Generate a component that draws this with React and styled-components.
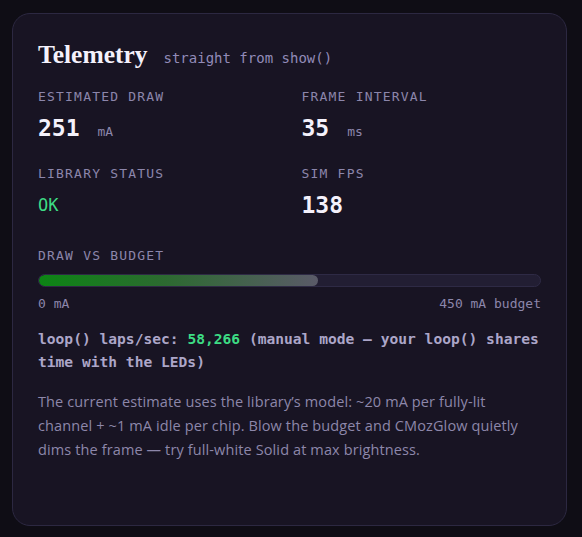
import React from "react";
import styled, { createGlobalStyle } from "styled-components";

const Global = createGlobalStyle`
  html, body {
    margin: 0;
    padding: 0;
    background: #0f0d15;
  }
  body {
    font-family: "DejaVu Sans", sans-serif;
  }
`;

const Page = styled.div`
  padding: 13px 15px 11px 12px;
  min-height: 537px;
  box-sizing: border-box;
`;

const Card = styled.section`
  box-sizing: border-box;
  width: 555px;
  height: 513px;
  background: #181423;
  border: 1px solid #2c2841;
  border-radius: 18px;
  padding: 26px 25px 0 25px;
`;

const Header = styled.div`
  display: flex;
  align-items: baseline;
  gap: 16px;
  margin-bottom: 19px;
`;

const Title = styled.h2`
  margin: 0;
  font-family: "Liberation Serif", serif;
  font-weight: 700;
  font-size: 25.5px;
  line-height: 30px;
  color: #f4f1fb;
`;

const Sub = styled.span`
  font-family: "DejaVu Sans Mono", monospace;
  font-size: 14px;
  color: #928bb8;
`;

const Stats = styled.div`
  display: grid;
  grid-template-columns: 1fr 1fr;
  column-gap: 24px;
  row-gap: 20px;
`;

const Stat = styled.div`
  display: flex;
  flex-direction: column;
  gap: 9px;
`;

const Label = styled.div`
  font-family: "DejaVu Sans Mono", monospace;
  font-size: 13px;
  line-height: 16px;
  letter-spacing: 1.2px;
  color: #8c86ab;
  text-transform: uppercase;
`;

const Value = styled.div`
  font-family: "DejaVu Sans Mono", monospace;
  font-size: ${(p) => (p.$small ? "17px" : "23px")};
  line-height: 28px;
  font-weight: ${(p) => (p.$small ? 400 : 700)};
  color: ${(p) => (p.$ok ? "#3ddc84" : "#f4f1fb")};
`;

const Unit = styled.span`
  font-size: 13px;
  font-weight: 400;
  color: #8c86ab;
  margin-left: 18px;
`;

const BudgetBlock = styled.div`
  margin-top: 29px;
  display: flex;
  flex-direction: column;
`;

const Track = styled.div`
  margin-top: 10px;
  height: 13px;
  box-sizing: border-box;
  border: 1px solid #2e2a45;
  background: #221e33;
  border-radius: 7px;
  overflow: hidden;
`;

const Fill = styled.div`
  height: 100%;
  border-radius: 7px;
  background: linear-gradient(90deg, #0c8514 0%, #2c6a30 45%, #5a5a68 100%);
`;

const Scale = styled.div`
  display: flex;
  justify-content: space-between;
  margin-top: 9px;
  font-family: "DejaVu Sans Mono", monospace;
  font-size: 13px;
  line-height: 16px;
  color: #8c86ab;
`;

const Laps = styled.p`
  margin: 15px 0 0;
  font-family: "DejaVu Sans Mono", monospace;
  font-size: 14.6px;
  line-height: 23px;
  font-weight: 600;
  color: #aca6c8;
`;

const Num = styled.span`
  color: #3ddc84;
  font-weight: 700;
`;

const Note = styled.p`
  margin: 17px 0 0;
  font-family: "Open Sans", sans-serif;
  font-size: 14.5px;
  line-height: 24px;
  letter-spacing: 0.12px;
  color: #8d87aa;
`;

const draw = 251;
const budget = 450;

export default function App() {
  return (
    <Page>
      <Global />
      <Card>
        <Header>
          <Title>Telemetry</Title>
          <Sub>straight from show()</Sub>
        </Header>
        <Stats>
          <Stat>
            <Label>Estimated draw</Label>
            <Value>
              {draw}
              <Unit>mA</Unit>
            </Value>
          </Stat>
          <Stat>
            <Label>Frame interval</Label>
            <Value>
              35
              <Unit>ms</Unit>
            </Value>
          </Stat>
          <Stat>
            <Label>Library status</Label>
            <Value $ok $small>
              OK
            </Value>
          </Stat>
          <Stat>
            <Label>Sim FPS</Label>
            <Value>138</Value>
          </Stat>
        </Stats>
        <BudgetBlock>
          <Label>Draw vs budget</Label>
          <Track>
            <Fill style={{ width: `${(draw / budget) * 100}%` }} />
          </Track>
          <Scale>
            <span>0 mA</span>
            <span>{budget} mA budget</span>
          </Scale>
        </BudgetBlock>
        <Laps>
          loop() laps/sec: <Num>58,266</Num> (manual mode — your loop() shares
          time with the LEDs)
        </Laps>
        <Note>
          The current estimate uses the library’s model: ~20 mA per fully-lit
          channel + ~1 mA idle per chip. Blow the budget and CMozGlow quietly
          dims the frame — try full-white Solid at max brightness.
        </Note>
      </Card>
    </Page>
  );
}
